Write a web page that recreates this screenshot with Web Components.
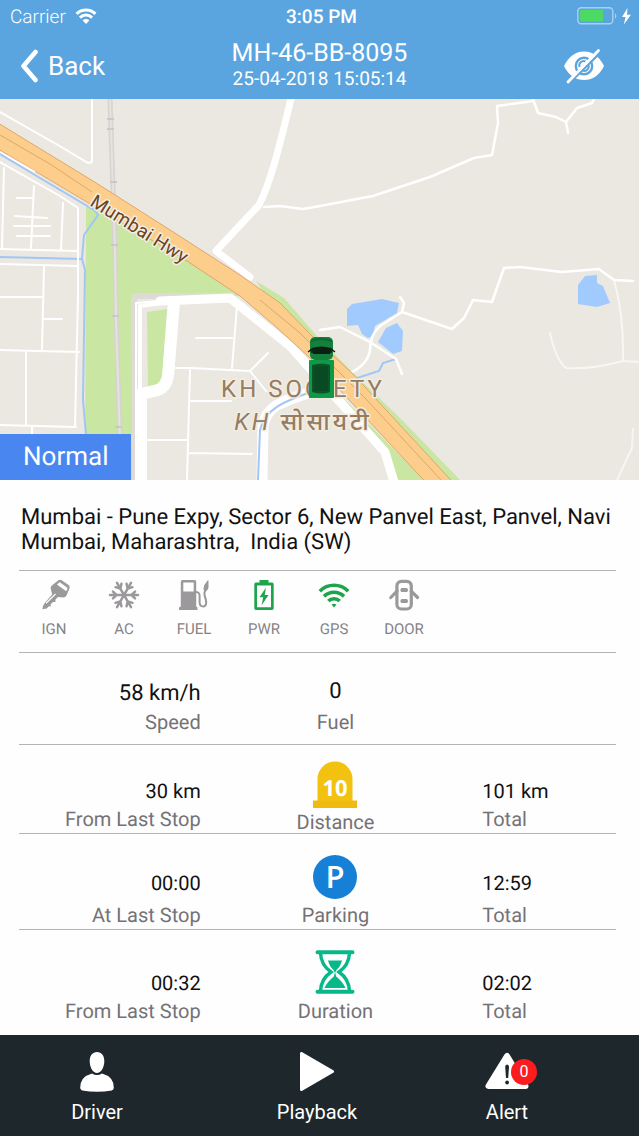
<!DOCTYPE html>
<html lang="en">
<head>
<meta charset="utf-8">
<meta name="viewport" content="width=device-width, initial-scale=1">
<title>Vehicle tracking</title>
<style>
    body {
        margin: 0;
        font-family: Roboto, "Noto Sans", sans-serif;
        text-rendering: geometricPrecision;
        background: #fefefe;
        color: #111;
    }
</style>
</head>
<body>
<tracking-page></tracking-page>

<script>
const ICONS = {
    wifi: `<svg viewBox="0 0 24 18" width="22" height="16"><g fill="none" stroke="currentColor" stroke-width="3.4"><path d="M1.4 6.6a15 15 0 0 1 21.2 0"/><path d="M5.2 10.8a9.6 9.6 0 0 1 13.6 0"/></g><path fill="currentColor" d="M8.2 14a5.4 5.4 0 0 1 7.6 0L12 18z"/></svg>`,
    battery: `<svg viewBox="0 0 56 20" width="56" height="20"><rect x=".8" y="1.8" width="35" height="16" rx="3.5" fill="none" stroke="#a9d2f2" stroke-width="1.4"/><rect x="3" y="4" width="23" height="11.6" rx="1" fill="#4cd964"/><path d="M38 7q2.6 2.8 0 6z" fill="#a9d2f2"/><path d="M50.5 2 45 11h3.600l-1.800 7.400L54 8.800h-4z" fill="#fff"/></svg>`,
    back: `<svg viewBox="0 0 18 34" width="18" height="34"><path d="M15.500 3 3.500 17l12 14" fill="none" stroke="currentColor" stroke-width="4.600" stroke-linecap="round" stroke-linejoin="round"/></svg>`,
    eye: `<svg viewBox="0 0 42 36" width="42" height="36"><path d="M1 18C6 8 13 3.500 21 3.500S36 8 41 18c-5 10-12 14-20 14S6 28 1 18z" fill="#fff"/><circle cx="21" cy="18" r="8.200" fill="none" stroke="#5aa5e0" stroke-width="2.400"/><path d="M16.500 19a4.500 4.500 0 0 1 6-5.500M25.500 17a4.500 4.500 0 0 1-6 5.500" fill="none" stroke="#5aa5e0" stroke-width="2"/><path d="M7.500 34 38 4" stroke="#5aa5e0" stroke-width="2.400"/><path d="M5 34 35.500 2.500" stroke="#fff" stroke-width="2.800" stroke-linecap="round"/></svg>`,
    key: `<svg viewBox="0 0 32 32" width="32" height="32"><path fill="currentColor" d="M14.200 6.200 20.500 1.200q1.600-1.100 3.200 0l6.800 4.800q1.700 1.400 1 3.200l-3 7.300q-.9 2-3 2l-5.600-.4-2.600 2.600.2 2.200-2.500.2-2.300 2.200.1 2-2.300.2-1.700 2-4.400.8q.2-3.500 2.300-6.200L14.200 15.500l-1.500-6q-.2-2 1.500-3.300z"/><path fill="#fefefe" d="m21.800 3.300 6.900 5q1 .9.500 1.900l-1 2-9.300-6.600z"/><path d="M8 24.200 17.500 15" stroke="#fefefe" stroke-width="1.200"/></svg>`,
    snow: `<svg viewBox="0 0 32 32" width="32" height="32"><g fill="none" stroke="currentColor" stroke-width="2.500" stroke-linecap="round"><path d="M2 16h28M5 12.600 8.600 16 5 19.400M27 12.600 23.400 16l3.600 3.400"/><path transform="rotate(60 16 16)" d="M2 16h28M5 12.600 8.600 16 5 19.400M27 12.600 23.400 16l3.600 3.400"/><path transform="rotate(120 16 16)" d="M2 16h28M5 12.600 8.600 16 5 19.400M27 12.600 23.400 16l3.600 3.400"/></g></svg>`,
    pump: `<svg viewBox="0 0 32 32" width="32" height="32"><path fill="currentColor" fill-rule="evenodd" d="M4.500 1h12q1.700 0 1.700 1.700V27.500l1.300 1V31H1v-2.500l1.800-1V2.700Q2.800 1 4.500 1zM5.300 3.500v9h10.400v-9z"/><path fill="none" stroke="currentColor" stroke-width="2" d="M18 13q4 0 3.600 5v5.500q.3 4 3.400 4t3.200-4q0-3-1.500-6.500-1-3 .8-6"/><path fill="currentColor" d="M29.500 1.500h1v7.300q-1 3.700-4.300 3.700-1.200-2.500-.1-6z"/></svg>`,
    power: `<svg viewBox="0 0 32 32" width="32" height="32"><path fill="currentColor" fill-rule="evenodd" d="M11.500 1h9v2.500H24q1.700 0 1.700 1.700V29.300Q25.700 31 24 31H8q-1.700 0-1.700-1.700V5.200Q6.300 3.500 8 3.500h3.500zM9 6.400v21.800h14V6.400z"/><path fill="currentColor" d="m18 8.500-6.500 9.800h3.700l-1.600 8 7-10.200h-3.900z"/></svg>`,
    gps: `<svg viewBox="0 0 32 32" width="32" height="32"><g fill="none" stroke="currentColor" stroke-width="3.600"><path d="M1.800 12.200a20 20 0 0 1 28.400 0"/><path d="M6 17.400a14.200 14.200 0 0 1 20 0"/><path d="M10.300 22.100a8 8 0 0 1 11.400 0"/></g><path fill="currentColor" d="M13.500 25.500q2.500-1.700 5 0L16 28.500z"/></svg>`,
    door: `<svg viewBox="0 0 32 32" width="32" height="32"><g fill="none" stroke="currentColor" stroke-width="3.200"><rect x="8.900" y="2.400" width="14.400" height="27.600" rx="4.500"/><path d="M9 12.200 2.800 18.500M23.200 12.200l6.400 6.300" stroke-linecap="round"/></g><g fill="currentColor"><rect x="12.500" y="9" width="7.400" height="4" rx="1.500"/><rect x="12.500" y="20" width="7.400" height="4" rx="1.500"/></g></svg>`,
    milestone: `<svg viewBox="0 0 44 47" width="44" height="47"><path fill="#f3c210" d="M4.500 40V18a17.500 17.500 0 0 1 35 0v22z"/><path fill="#efbb10" d="M0 39.500h44V47H0z"/><text x="22" y="35" text-anchor="middle" font-family="Open Sans, sans-serif" font-weight="700" font-size="22" fill="#fff">10</text></svg>`,
    parking: `<svg viewBox="0 0 44 44" width="44" height="44"><circle cx="22" cy="22" r="22" fill="#1580d6"/><text x="22" y="33" text-anchor="middle" font-family="Open Sans, sans-serif" font-weight="600" font-size="31" fill="#fff">P</text></svg>`,
    hourglass: `<svg viewBox="0 0 40 44" width="40" height="44"><g fill="none" stroke="#08b88a"><path stroke-width="4" stroke-linecap="round" d="M2.500 2.200h35M2.500 41.800h35"/><path stroke-width="3.400" d="M5.500 3q.5 12 10.500 19Q6 29 5.500 41M34.500 3q-.5 12-10.500 19 10 7 10.500 19"/></g><path fill="#08b88a" d="M13 10.500h14q-1.500 6-5.500 9.500L20 23l-1.500-3Q14.500 16.500 13 10.500zM20 22l1.200 4.500Q28 32 30.500 38h-21Q12 32 18.800 26.500z"/></svg>`,
    driver: `<svg viewBox="0 0 34 40" width="34" height="40"><path fill="currentColor" d="M17 0c4.500 0 7.300 3.600 7.300 9 0 6.500-3.300 12-7.300 12S9.700 15.500 9.700 9C9.700 3.600 12.500 0 17 0zM12 21.500q5 3 10 0 12 3.300 11.800 14.500-.2 1.800-2 2.500Q17 41 2.200 38.500.4 37.800.2 36 0 24.800 12 21.500z"/></svg>`,
    play: `<svg viewBox="0 0 34 40" width="34" height="40"><path d="M1.500 1.500v36L32.500 19.500z" fill="currentColor" stroke="currentColor" stroke-width="3" stroke-linejoin="round"/></svg>`,
    alert: `<svg viewBox="0 0 44 40" width="44" height="40"><path d="M22 4 3.500 34h37z" fill="currentColor" stroke="currentColor" stroke-width="6" stroke-linejoin="round"/><path d="M20.200 15q0-2.500 1.900-2.500T24 15l-.8 11h-2.200z" fill="#1e272b"/><circle cx="22.100" cy="30.500" r="1.900" fill="#1e272b"/></svg>`
};

class AppIcon extends HTMLElement {
    connectedCallback() {
        this.attachShadow({ mode: 'open' }).innerHTML = `
            <style>
                :host { display: block; flex: none; }
                svg { display: block; }
            </style>
            ${ICONS[this.getAttribute('name')]}
        `;
    }
}

class StatusBar extends HTMLElement {
    constructor() {
        super();
        this.attachShadow({ mode: 'open' }).innerHTML = `
            <style>
                :host {
                    display: grid;
                    grid-template-columns: 1fr auto 1fr;
                    align-items: center;
                    height: 32px;
                    padding: 0 6px 0 10px;
                    font-size: 19px;
                }
                .carrier { display: flex; align-items: center; gap: 9px; font-weight: 300; }
                .time { font-weight: 500; }
                app-icon:last-child { justify-self: end; }
            </style>
            <div class="carrier">Carrier <app-icon name="wifi"></app-icon></div>
            <div class="time">3:05 PM</div>
            <app-icon name="battery"></app-icon>
        `;
    }
}

class NavBar extends HTMLElement {
    connectedCallback() {
        this.attachShadow({ mode: 'open' }).innerHTML = `
            <style>
                :host {
                    display: grid;
                    grid-template-columns: 1fr auto 1fr;
                    align-items: center;
                    height: 67px;
                    padding: 0 20px;
                }
                button {
                    display: flex;
                    align-items: center;
                    gap: 10px;
                    padding: 0;
                    border: 0;
                    background: none;
                    color: inherit;
                    font: 26px Roboto, sans-serif;
                }
                .hide { justify-self: end; margin-right: 14px; }
                .title { text-align: center; }
                h1 { margin: 0; font-size: 25px; line-height: 26px; font-weight: 400; }
                p { margin: 0; font-size: 19px; line-height: 24px; }
            </style>
            <button type="button"><app-icon name="back"></app-icon>Back</button>
            <div class="title">
                <h1>${this.getAttribute('vehicle')}</h1>
                <p>${this.getAttribute('time')}</p>
            </div>
            <button type="button" class="hide" aria-label="Hide"><app-icon name="eye"></app-icon></button>
        `;
    }
}

class LiveMap extends HTMLElement {
    constructor() {
        super();
        this.attachShadow({ mode: 'open' }).innerHTML = `
            <style>
                :host { display: block; position: relative; }
                svg { display: block; width: 100%; height: auto; }
                .road { fill: none; stroke: #fff; stroke-linejoin: round; stroke-linecap: round; }
                .water { fill: #a1cbff; }
                .stream { fill: none; stroke: #a1c6f5; stroke-width: 2; }
                .halo { paint-order: stroke; stroke: #f3eee4; stroke-width: 3px; stroke-linejoin: round; }
                ::slotted(*) { position: absolute; left: 0; bottom: 0; }
            </style>
            <svg viewBox="0 99 639 381">
                <rect y="99" width="639" height="381" fill="#ebe8e1"/>

                <!-- green belt -->
                <path fill="#c9e6a2" d="M86 207 96 203 190 262 242 296 200 298 133 294 131 303 134 480H85z"/>
                <path fill="#c9e6a2" d="M147 312 167 309 162 382 148 388z"/>
                <path fill="#c9e6a2" d="M256 281 284 298 316 335 352 372 400 418 460 480H440L300 345z"/>
                <path fill="#c9e6a2" d="M343 398 424 480H396L388 455 345 405z"/>
                <path fill="none" stroke="#dedad5" stroke-width="6" d="M135 480 134 300 136 296H235"/>

                <!-- power line -->
                <path fill="none" stroke="#d6d3d0" stroke-width="5" d="M110 99 115 250 116 320 120 440"/>
                <path fill="none" stroke="#e5e2df" stroke-width="2" d="M110 99 115 250 116 320 120 440"/>
                <path stroke="#cbc8c6" stroke-width="2" d="M107 119h7M107 129h7M110 182h7M111 245h7M112 316h7M115 427h7"/>

                <!-- streams and ponds -->
                <path class="stream" d="M0 257 82 259"/>
                <path class="water" d="M347 309 352 304 382 299 399 303 397 313 375 326 373 336 368 338 362 334 358 325 347 326z"/>
                <path class="water" d="M378 342 386 328 397 323 403 331 402 351 393 354z"/>
                <path class="water" d="M578 285 585 276 597 275 597 283 603 286 610 303 597 307 578 304z"/>
                <path class="stream" d="M396 359 383 363 379 371 357 378"/>
                <path d="M320 389C280 402 267 405 263 426L262 480" class="road" stroke-width="11"/>
                <path d="M320 389C280 402 265 410 260 430L258 480" class="stream"/>

                <!-- minor roads, left -->
                <g class="road" stroke-width="2">
                    <path d="M0 112 58 145 88 163 92 162V99"/>
                    <path d="M0 162 60 196 78 208V296L75 427"/>
                    <path d="M4 168 2 248M34 186 31 248M63 203 61 250M0 249 78 251M0 264 78 266"/>
                    <path d="M17 198H33M15 216 47 218M14 226H50M17 236H50"/>
                    <path d="M44 266 42 350M0 297H42M44 319H62M0 350 79 352M26 352V425M0 425 76 427"/>
                    <path d="M32 427V435"/>
                </g>
                <!-- minor roads, society -->
                <g class="road" stroke-width="2">
                    <path d="M176 368 190 368 250 371 268 353M237 306 232 368M196 338H232"/>
                    <path d="M190 370 187 480M190 401H231M188 453 252 454M148 440H187M250 371 266 391"/>
                </g>
                <!-- minor roads, east -->
                <g class="road" stroke-width="2.500">
                    <path d="M264 207 280 206 303 209 320 206 373 196 430 177 474 158 492 155 498 123 497 106 533 101"/>
                    <path d="M533 99 538 113 556 117 566 122 568 133M566 122 577 108 592 103 594 99"/>
                    <path d="M320 330 340 327 370 342 396 359 402 374M400 297 404 303 402 312 380 326Q370 335 370 350 368 364 352 372"/>
                    <path d="M402 312 452 329 464 318 473 300 492 302 504 268 520 267 562 272 599 269 614 280 633 281"/>
                </g>
                <g class="road" stroke-width="2" opacity=".6">
                    <path d="M614 280Q624 315 623 361M550 333Q556 360 566 368 590 370 623 361L639 362M633 429 632 448 617 480"/>
                </g>

                <!-- main roads -->
                <path class="road" stroke-width="7" d="M291 99C282 135 272 180 259 205L216 251 250 277"/>
                <path class="road" stroke-width="2" d="M136 396V303L170 300"/>
                <path class="road" stroke-width="4" d="M140 396V306L170 302"/>
                <path class="road" stroke-width="12" d="M141 486V394L158 390Q166 387 168 376L174 302"/>
                <path class="road" stroke-width="9" d="M160 301 230 298 290 346 385 452 394 482"/>

                <!-- highway -->
                <path fill="#fdce8b" stroke="#e0a56c" stroke-width="1" d="M-2 123 93 181 167 228 240 275 280 303 313 337 352 373 459 489H432L310 358 275 326 240 296 187 261 80 198-2 149z"/>
                <path fill="none" stroke="#dda76c" stroke-width="1" d="M0 135 50 164 92 192M260 300 300 333 365 398 441 480"/>
                <path fill="none" stroke="#fff" stroke-width="2" d="M0 152 35 172"/>
                <path class="stream" d="M0 154 40 178 94 210 98 215 84 235 82 259 85 270 83 400 86 435"/>

                <text class="halo" transform="translate(89 205) rotate(32)" font-size="19" fill="#6b4423">Mumbai Hwy</text>
                <g fill="#967c61" font-size="24" letter-spacing="3">
                    <text class="halo" x="303" y="397" text-anchor="middle">KH SOCIETY</text>
                    <text class="halo" x="303" y="430" text-anchor="middle" font-weight="500"><tspan font-style="italic" font-weight="400">KH</tspan> सोसायटी</text>
                </g>

                <!-- vehicle -->
                <rect x="310" y="337" width="23" height="23" rx="5" fill="#15803c"/>
                <path d="M311 341q10-4 21 0" fill="none" stroke="#0d6b30" stroke-width="2"/>
                <path d="M312 348q9-3 19 0l-1 6h-17z" fill="#0b1f12"/>
                <path d="M308 352l4-3v4M335 352l-4-3v4" fill="none" stroke="#0b1f12" stroke-width="1.500"/>
                <rect x="309" y="360" width="25" height="38" rx="1" fill="#0d9a48"/>
                <path d="M312 365q10-3 18 0v27q-8 3-18 0z" fill="#0c5428"/>
                <rect x="314" y="366" width="14" height="25" fill="#0a4a23"/>
            </svg>
            <slot></slot>
        `;
    }
}

class StateBadge extends HTMLElement {
    constructor() {
        super();
        this.attachShadow({ mode: 'open' }).innerHTML = `
            <style>
                :host {
                    display: block;
                    padding: 0 23px;
                    background: #4a86f0;
                    color: #fff;
                    font-size: 26px;
                    line-height: 46px;
                }
            </style>
            <slot></slot>
        `;
    }
}

class SensorItem extends HTMLElement {
    connectedCallback() {
        this.attachShadow({ mode: 'open' }).innerHTML = `
            <style>
                :host {
                    display: flex;
                    flex-direction: column;
                    align-items: center;
                    gap: 8px;
                    color: #9b999b;
                }
                :host([on]) { color: #1ea54c; }
                span { font-size: 15px; line-height: 20px; color: #858386; }
            </style>
            <app-icon name="${this.getAttribute('icon')}"></app-icon>
            <span><slot></slot></span>
        `;
    }
}

class MetricCell extends HTMLElement {
    connectedCallback() {
        const icon = this.getAttribute('icon');
        const value = this.getAttribute('value');
        this.attachShadow({ mode: 'open' }).innerHTML = `
            <style>
                :host {
                    display: flex;
                    flex-direction: column;
                    justify-content: flex-end;
                    gap: var(--gap, 6px);
                    line-height: 22px;
                    padding-bottom: 3px;
                }
                :host([align="right"]) { align-items: flex-end; }
                :host([align="center"]) {
                    align-items: center;
                    gap: var(--icon-gap, 6px);
                    padding-bottom: var(--icon-bottom, 3px);
                }
                :host([align="left"]) { align-items: flex-start; padding-left: 12px; }
                .value { font-size: var(--value-size, 20px); }
                .label { font-size: 20px; color: #757276; }
            </style>
            ${icon ? `<app-icon name="${icon}"></app-icon>` : `<div class="value">${value}</div>`}
            <div class="label"><slot></slot></div>
        `;
    }
}

class MetricRow extends HTMLElement {
    constructor() {
        super();
        this.attachShadow({ mode: 'open' }).innerHTML = `
            <style>
                :host {
                    display: grid;
                    grid-template-columns: 182fr 270fr 146fr;
                    margin: 0 23px 0 19px;
                    border-top: 1px solid #b5b3b7;
                }
            </style>
            <slot></slot>
        `;
    }
}

class TabItem extends HTMLElement {
    connectedCallback() {
        const count = this.getAttribute('count');
        this.attachShadow({ mode: 'open' }).innerHTML = `
            <style>
                :host { display: flex; justify-content: center; }
                button {
                    display: flex;
                    flex-direction: column;
                    align-items: center;
                    gap: 8px;
                    padding: 0;
                    border: 0;
                    background: none;
                    color: #fff;
                    font: 20px/24px Roboto, sans-serif;
                }
                .icon { position: relative; }
                .count {
                    position: absolute;
                    top: 7px;
                    right: -8px;
                    width: 26px;
                    border-radius: 50%;
                    background: #fb1c1f;
                    font-size: 16px;
                    line-height: 26px;
                    text-align: center;
                }
            </style>
            <button type="button">
                <span class="icon">
                    <app-icon name="${this.getAttribute('icon')}"></app-icon>
                    ${count ? `<span class="count">${count}</span>` : ''}
                </span>
                <slot></slot>
            </button>
        `;
    }
}

class TrackingPage extends HTMLElement {
    constructor() {
        super();
        this.attachShadow({ mode: 'open' }).innerHTML = `
            <style>
                :host { display: flex; flex-direction: column; min-height: 100vh; }
                header { background: #5aa5e0; color: #fff; }
                main { flex: 1; }
                .address {
                    margin: 0 23px 0 21px;
                    padding: 25px 0 15px;
                    font-size: 22px;
                    line-height: 25px;
                    white-space: pre-wrap;
                }
                .sensors {
                    display: grid;
                    grid-template-columns: repeat(6, 70px);
                    margin: 0 23px 0 19px;
                    padding: 8px 0 13px;
                    border-top: 1px solid #b5b3b7;
                }
                .speed { --value-size: 22px; --icon-gap: 8px; padding: 28px 0 8px; }
                .distance { --icon-gap: 3px; --icon-bottom: 0; padding-top: 16px; }
                .parking { --gap: 10px; --icon-gap: 5px; padding-top: 21px; }
                .duration { padding: 20px 0 10px; }
                footer {
                    display: grid;
                    grid-template-columns: 194fr 246fr 134fr 65fr;
                    padding: 17px 0 12px;
                    background: #1e272b;
                }
            </style>
            <header>
                <status-bar></status-bar>
                <nav-bar vehicle="MH-46-BB-8095" time="25-04-2018 15:05:14"></nav-bar>
            </header>
            <main>
                <live-map><state-badge>Normal</state-badge></live-map>
                <p class="address">Mumbai - Pune Expy, Sector 6, New Panvel East, Panvel, Navi Mumbai, Maharashtra,  India (SW)</p>
                <div class="sensors">
                    <sensor-item icon="key">IGN</sensor-item>
                    <sensor-item icon="snow">AC</sensor-item>
                    <sensor-item icon="pump">FUEL</sensor-item>
                    <sensor-item icon="power" on>PWR</sensor-item>
                    <sensor-item icon="gps" on>GPS</sensor-item>
                    <sensor-item icon="door">DOOR</sensor-item>
                </div>
                <metric-row class="speed">
                    <metric-cell align="right" value="58 km/h">Speed</metric-cell>
                    <metric-cell align="center" value="0">Fuel</metric-cell>
                </metric-row>
                <metric-row class="distance">
                    <metric-cell align="right" value="30 km">From Last Stop</metric-cell>
                    <metric-cell align="center" icon="milestone">Distance</metric-cell>
                    <metric-cell align="left" value="101 km">Total</metric-cell>
                </metric-row>
                <metric-row class="parking">
                    <metric-cell align="right" value="00:00">At Last Stop</metric-cell>
                    <metric-cell align="center" icon="parking">Parking</metric-cell>
                    <metric-cell align="left" value="12:59">Total</metric-cell>
                </metric-row>
                <metric-row class="duration">
                    <metric-cell align="right" value="00:32">From Last Stop</metric-cell>
                    <metric-cell align="center" icon="hourglass">Duration</metric-cell>
                    <metric-cell align="left" value="02:02">Total</metric-cell>
                </metric-row>
            </main>
            <footer>
                <tab-item icon="driver">Driver</tab-item>
                <tab-item icon="play">Playback</tab-item>
                <tab-item icon="alert" count="0">Alert</tab-item>
            </footer>
        `;
    }
}

customElements.define('app-icon', AppIcon);
customElements.define('status-bar', StatusBar);
customElements.define('nav-bar', NavBar);
customElements.define('live-map', LiveMap);
customElements.define('state-badge', StateBadge);
customElements.define('sensor-item', SensorItem);
customElements.define('metric-cell', MetricCell);
customElements.define('metric-row', MetricRow);
customElements.define('tab-item', TabItem);
customElements.define('tracking-page', TrackingPage);
</script>
</body>
</html>
